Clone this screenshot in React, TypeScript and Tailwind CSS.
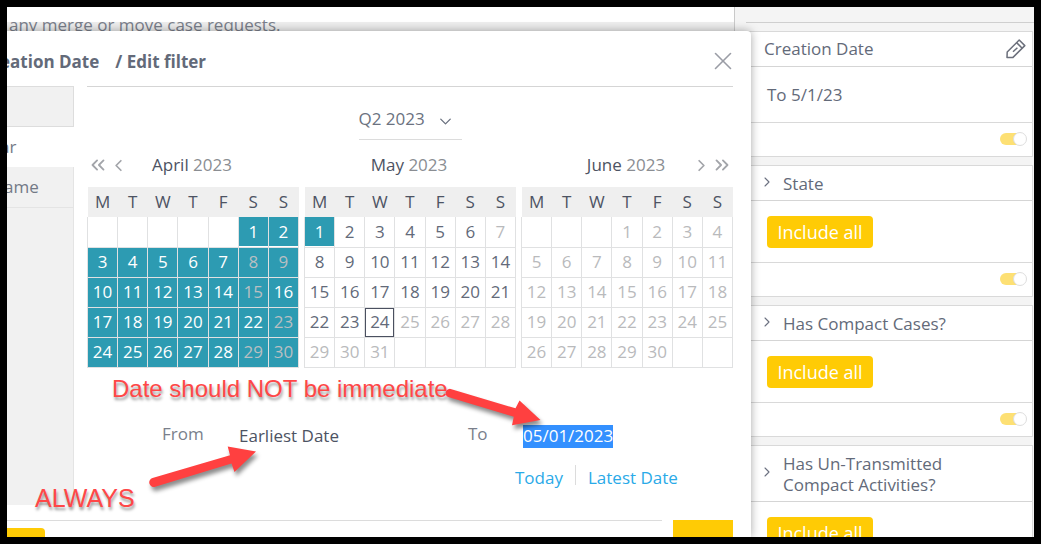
import React from "react";
import { ChevronDown, ChevronLeft, ChevronRight, ChevronsLeft, ChevronsRight, X } from "lucide-react";

type Tone = "picked" | "pickedFaint" | "normal" | "faint" | "today";

interface Month {
  name: string;
  year: number;
  offset: number;
  days: number;
  tone: (day: number) => Tone;
}

const WEEKDAYS = ["M", "T", "W", "T", "F", "S", "S"];

const MONTHS: Month[] = [
  {
    name: "April",
    year: 2023,
    offset: 5,
    days: 30,
    tone: (d) => ([8, 9, 15, 23, 29, 30].includes(d) ? "pickedFaint" : "picked"),
  },
  {
    name: "May",
    year: 2023,
    offset: 0,
    days: 31,
    tone: (d) => (d === 1 ? "picked" : d === 24 ? "today" : d === 7 || d > 24 ? "faint" : "normal"),
  },
  { name: "June", year: 2023, offset: 3, days: 30, tone: () => "faint" },
];

const TONES: Record<Tone, string> = {
  picked: "bg-[#2d9bb2] text-white font-medium",
  pickedFaint: "bg-[#2d9bb2] text-[#b9bfc2]",
  normal: "text-[#636a79]",
  faint: "text-[#b9babc]",
  today: "text-[#636a79] outline outline-1 -outline-offset-1 outline-[#4b5060]",
};

function MonthTable({ month }: { month: Month }) {
  const weeks = Array.from({ length: 5 }, (_, w) =>
    Array.from({ length: 7 }, (_, d) => {
      const day = w * 7 + d - month.offset + 1;
      return day > 0 && day <= month.days ? day : null;
    }),
  );
  return (
    <table className="w-full table-fixed border-collapse text-center" aria-label={`${month.name} ${month.year}`}>
      <thead>
        <tr className="h-[30px] bg-[#efefef]">
          {WEEKDAYS.map((d, i) => (
            <th key={i} className="p-0 font-normal text-[#4d5363]">
              {d}
            </th>
          ))}
        </tr>
      </thead>
      <tbody>
        {weeks.map((week, w) => (
          <tr key={w} className="h-[30px]">
            {week.map((day, i) => (
              <td key={i} className="border border-t-0 border-[#e0e1e2] p-0">
                {day && (
                  <button className={`block h-[29px] w-full leading-7 ${TONES[month.tone(day)]}`}>{day}</button>
                )}
              </td>
            ))}
          </tr>
        ))}
      </tbody>
    </table>
  );
}

function MonthTitle({ month }: { month: Month }) {
  return (
    <h3 className="flex-1 pr-[2px] text-center text-[#4d5363]">
      {month.name} <span className="text-[#8a8d92]">{month.year}</span>
    </h3>
  );
}

function PencilIcon() {
  return (
    <svg width="22" height="22" viewBox="0 0 22 22" fill="none" stroke="#6b6f7b" strokeWidth="1.5" strokeLinejoin="round" aria-hidden="true">
      <path d="M2 19.6 L2.2 14 L14.2 2 L19.8 7.6 L8 19.4 Z" />
      <path d="M11.6 4.6 L17.2 10.2 M8 13.8 L12.4 9.8" />
    </svg>
  );
}

function Toggle({ label }: { label: string }) {
  return (
    <label className="relative flex h-[14px] w-[27px] items-center">
      <input type="checkbox" role="switch" defaultChecked aria-label={label} className="h-3 w-6 appearance-none rounded-full bg-[#fde074]" />
      <span className="absolute right-0 top-0 size-[14px] rounded-full border border-[#dedede] bg-white" />
    </label>
  );
}

interface CardProps {
  title: string;
  editable?: boolean;
  children: React.ReactNode;
}

function FilterCard({ title, editable, children }: CardProps) {
  return (
    <section className="shrink-0 border border-[#d9d9d9] bg-white">
      <header className="flex min-h-[35px] items-center border-b border-[#d5d5d5] pr-[5px] pl-[17px]">
        {editable ? (
          <>
            <h2 className="flex-1">{title}</h2>
            <button aria-label="Edit filter">
              <PencilIcon />
            </button>
          </>
        ) : (
          <>
            <button aria-label={`Expand ${title}`} className="-ml-[5px] w-6 pb-[3px]">
              <ChevronRight size={16} strokeWidth={1.6} className="text-[#6b7080]" />
            </button>
            <h2 className="max-w-[190px] pt-[7px] pb-[6px] leading-[21px]">{title}</h2>
          </>
        )}
      </header>
      {children}
      <footer className="flex h-[34px] items-center justify-end border-t border-[#d9d9d9] pr-[5px] pb-px">
        <Toggle label={`${title} enabled`} />
      </footer>
    </section>
  );
}

function IncludeAll() {
  return (
    <div className="flex h-[61px] items-center pl-5">
      <button className="h-8 w-[106px] rounded-[4px] bg-[#ffcb05] text-[18px] text-white">Include all</button>
    </div>
  );
}

function FilterRail() {
  return (
    <aside className="flex w-[300px] shrink-0 flex-col overflow-hidden border-l border-[#c9c9c9] bg-[#f4f4f4] pl-[11px] text-[#636a79]">
      <div className="h-4 shrink-0 border-b border-[#cfcfcf]" />
      <div className="flex flex-col gap-2 pt-2 pr-[1px]">
        <FilterCard title="Creation Date" editable>
          <p className="flex h-[55px] items-center pl-5">To 5/1/23</p>
        </FilterCard>
        {["State", "Has Compact Cases?", "Has Un-Transmitted Compact Activities?"].map((title) => (
          <FilterCard key={title} title={title}>
            <IncludeAll />
          </FilterCard>
        ))}
      </div>
    </aside>
  );
}

function DateRange() {
  return (
    <div className="mt-[55px] flex items-start pl-[75px]">
      <label htmlFor="from" className="w-[77px] leading-[22px] text-[#7a7f8b]">
        From
      </label>
      <input id="from" defaultValue="Earliest Date" className="mt-[2px] h-[23px] w-[205px] text-[#4d5363] outline-none" />
      <label htmlFor="to" className="ml-6 w-[47px] leading-[22px] text-[#7a7f8b]">
        To
      </label>
      <div className="flex flex-col gap-[19px] pt-[2px]">
        <input id="to" defaultValue="05/01/2023" className="ml-2 h-[23px] w-[90px] bg-[#3390ff] text-white outline-none" />
        <div className="flex items-center gap-3 leading-[22px] text-[#2aaae8]">
          <a href="#today">Today</a>
          <span className="-mt-[5px] h-5 w-px bg-[#dcdcdc]" />
          <a href="#latest">Latest Date</a>
        </div>
      </div>
    </div>
  );
}

function FilterDialog() {
  return (
    <div
      role="dialog"
      aria-label="Edit filter"
      className="absolute top-6 right-[283px] bottom-0 -left-2 flex flex-col overflow-hidden rounded-tr-[4px] bg-white shadow-[0_0_10px_rgba(0,0,0,0.35)]"
    >
      <header className="flex h-[55px] shrink-0 items-center pt-1 pr-[13px] font-bold text-[#636a79]">
        <h1 className="flex flex-1 gap-4 pt-[2px] pl-px">
          <span>eation Date</span>
          <span>/ Edit filter</span>
        </h1>
        <button aria-label="Close" className="text-[#9a9da6]">
          <X size={30} strokeWidth={1.3} />
        </button>
      </header>

      <div className="flex min-h-0 flex-1">
        <nav className="mb-[15px] flex w-[75px] shrink-0 flex-col border-t border-[#dddddd] bg-[#f1f1f1] text-[#737986]">
          <div className="h-10 border-r border-b border-[#dddddd]" />
          <a href="#calendar" className="flex h-10 items-center bg-white pl-[1px]">
            ar
          </a>
          <a href="#name" className="flex h-[41px] items-center border-r border-b border-[#e4e4e4] pl-[5px]">
            ame
          </a>
          <div className="flex-1 border-r border-[#e4e4e4]" />
        </nav>

        <main className="mr-[18px] ml-[13px] flex-1 border-t border-[#d5d5d5]">
          <div className="relative mx-auto mt-[15px] w-[103px] border-b border-[#dcdcdc] pb-[3px]">
            <select aria-label="Quarter" className="h-[34px] w-full appearance-none bg-transparent text-[#6b7280] outline-none">
              <option>Q2 2023</option>
            </select>
            <ChevronDown size={19} strokeWidth={1.7} className="pointer-events-none absolute top-[10px] right-[7px] text-[#6b7280]" />
          </div>

          <div className="mt-[13px] flex h-6 items-center gap-[5px]">
            {MONTHS.map((m, i) => (
              <div key={m.name} className="relative flex flex-1 items-center text-[#a3a5aa]">
                <MonthTitle month={m} />
                {i === 0 && (
                  <div className="absolute left-0 flex items-center">
                    <button aria-label="Previous quarter">
                      <ChevronsLeft size={22} strokeWidth={2} />
                    </button>
                    <button aria-label="Previous month">
                      <ChevronLeft size={19} strokeWidth={2.2} />
                    </button>
                  </div>
                )}
                {i === 2 && (
                  <div className="absolute right-0 flex items-center">
                    <button aria-label="Next month">
                      <ChevronRight size={19} strokeWidth={2.2} />
                    </button>
                    <button aria-label="Next quarter">
                      <ChevronsRight size={22} strokeWidth={2} />
                    </button>
                  </div>
                )}
              </div>
            ))}
          </div>

          <div className="mt-[10px] grid grid-cols-3 gap-[5px]">
            {MONTHS.map((m) => (
              <MonthTable key={m.name} month={m} />
            ))}
          </div>

          <DateRange />
        </main>
      </div>

      <footer className="flex h-[17px] shrink-0 gap-[11px] pr-[18px]">
        <div className="flex-1 border-t border-[#dcdcdc] pt-[7px]">
          <button aria-label="Cancel" className="block h-8 w-[46px] rounded-[4px] bg-[#ffcb05]" />
        </div>
        <button aria-label="Apply" className="h-8 w-[60px] bg-[#ffcb05]" />
      </footer>
    </div>
  );
}

function Annotations() {
  const note = "absolute font-['Liberation_Sans',sans-serif] leading-7 whitespace-nowrap text-[#ff4747] [text-shadow:1px_3px_3px_rgba(0,0,0,0.4)]";
  return (
    <div className="pointer-events-none absolute inset-0">
      <p className={`${note} top-[368px] left-[105px] text-[24px]`}>Date should NOT be immediate</p>
      <p className={`${note} top-[477px] left-[28px] text-[25px]`}>ALWAYS</p>
      <svg className="absolute top-0 left-0 drop-shadow-[2px_4px_2px_rgba(0,0,0,0.45)]" width="620" height="530" viewBox="7 7 620 530" fill="#ff4040" aria-hidden="true">
        <path d="M451.5 389.2 L515.5 408.3 L519.5 400.5 L540.5 420 L512 425.3 L513.8 416.8 L448.2 397 A4.2 4.2 0 0 1 451.5 389.2 Z" />
        <path d="M152.5 478 L230 455.2 L227.7 446.5 L256 451.5 L234.5 472 L231.5 463.5 L155.2 486.8 A4.5 4.5 0 0 1 152.5 478 Z" />
      </svg>
    </div>
  );
}

export default function App() {
  return (
    <div className="h-screen border-[7px] border-black bg-white font-['Open_Sans','Noto_Sans',sans-serif] text-[17px] leading-6">
      <div className="relative flex h-full overflow-hidden">
        <div className="min-w-0 flex-1 pt-[15px]">
          <div className="flow-root h-10 bg-[#eeeeee]">
            <p className="-mt-[9px] pl-[2px] text-[#7a7f8b]">any merge or move case requests.</p>
          </div>
        </div>
        <FilterRail />
        <FilterDialog />
        <Annotations />
      </div>
    </div>
  );
}
